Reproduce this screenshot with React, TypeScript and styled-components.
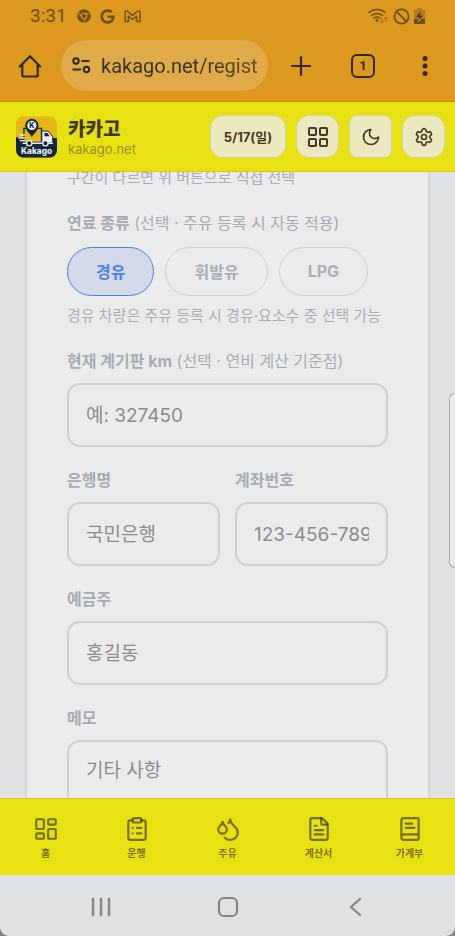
import React from 'react';
import styled, { createGlobalStyle, css } from 'styled-components';
import {
  Ban,
  BookText,
  ClipboardList,
  Droplets,
  FileText,
  LayoutDashboard,
  LayoutGrid,
  Settings,
} from 'lucide-react';
import { FaChrome, FaGoogle } from 'react-icons/fa';

const GlobalStyle = createGlobalStyle`
  * { box-sizing: border-box; }
  body {
    margin: 0;
    background: #858585;
    font-family: Inter, 'Noto Sans CJK KR', sans-serif;
  }
  button, input, textarea { font-family: inherit; }
`;

const Screen = styled.div`
  position: relative;
  display: flex;
  flex-direction: column;
  height: 100vh;
  overflow: hidden;
  border-radius: 0 0 9px 9px;
  background: #e0e1e3;
`;

/* Browser chrome */

const Chrome = styled.header`
  flex: none;
  background: #dd991d;
  border-bottom: 1px solid #c98a16;
  font-family: Roboto, sans-serif;
`;

const StatusBar = styled.div`
  display: flex;
  align-items: center;
  gap: 9px;
  height: 30px;
  padding: 2px 30px 0;
  color: #6f4f15;
`;

const Clock = styled.time`
  margin-right: 1px;
  font-size: 19px;
  line-height: 24px;
`;

const StatusRight = styled.div`
  display: flex;
  align-items: center;
  gap: 4px;
  margin-left: auto;
`;

const Toolbar = styled.div`
  display: flex;
  align-items: center;
  height: 71px;
  padding: 0 15px;
`;

const ToolButton = styled.button`
  display: flex;
  align-items: center;
  justify-content: center;
  width: 30px;
  height: 40px;
  padding: 0;
  border: 0;
  background: none;
  color: #2f2a20;
`;

const ToolGroup = styled.div`
  display: flex;
  gap: 32px;
  margin-left: 18px;
`;

const Address = styled.label`
  display: flex;
  flex: 1;
  align-items: center;
  gap: 9px;
  min-width: 0;
  height: 51px;
  margin-left: 16px;
  padding: 0 10px;
  border-radius: 26px;
  background: #e0aa48;
  color: #2f2a20;
`;

const AddressInput = styled.input`
  flex: 1;
  min-width: 0;
  padding: 0;
  border: 0;
  outline: 0;
  background: none;
  color: #3a3323;
  font-size: 20px;
  line-height: 28px;
  mask-image: linear-gradient(to right, #000 60%, rgba(0, 0, 0, 0.75));
`;

/* App header */

const AppBar = styled.header`
  display: flex;
  flex: none;
  align-items: center;
  gap: 11px;
  height: 70px;
  padding: 0 10px 0 16px;
  border-bottom: 1px solid #cfc91c;
  background: #e7e112;
`;

const Brand = styled.div`
  flex: 1;
  min-width: 0;
`;

const BrandName = styled.h1`
  margin: 0;
  color: #43371c;
  font-size: 19px;
  font-weight: 800;
  line-height: 24px;
`;

const BrandHost = styled.p`
  margin: 0;
  color: #98901d;
  font-size: 13px;
  line-height: 14px;
`;

const Actions = styled.div`
  display: flex;
  gap: 10px;
`;

const ActionButton = styled.button<{ $wide?: boolean; $square?: boolean }>`
  display: flex;
  align-items: center;
  justify-content: center;
  width: ${(p) => (p.$wide ? '76px' : '43px')};
  height: 43px;
  padding: 0;
  border: 1px solid #d5d3a8;
  border-radius: ${(p) => (p.$square ? '8px' : '13px')};
  background: #ebe8c0;
  color: #463822;
  font-size: 13px;
  font-weight: 700;
`;

/* Form */

const Content = styled.main`
  flex: 1;
  min-height: 0;
  overflow: hidden;
  padding: 0 25px;
`;

const Card = styled.form`
  display: flex;
  flex-direction: column;
  gap: 21px;
  margin-top: -41px;
  padding: 35px 40px 40px;
  border: solid #d3d5d6;
  border-width: 0 2px;
  background: #ebebeb;
`;

const Hint = styled.p`
  margin: 0;
  color: #a9adb3;
  font-size: 15px;
  line-height: 24px;
`;

const labelText = css`
  color: #a6acb4;
  font-size: 16px;
  font-weight: 700;
  line-height: 24px;
`;

const Field = styled.div`
  display: flex;
  flex-direction: column;
  gap: 10px;
  min-width: 0;
`;

const Label = styled.label`
  ${labelText}
`;

const Optional = styled.span`
  font-weight: 400;
`;

const controlBox = css`
  display: block;
  width: 100%;
  border: 2px solid #d0d0d0;
  border-radius: 13px;
  outline: 0;
  background: transparent;
  color: #555;
  font-size: 19px;
  &::placeholder {
    color: #8b8b8b;
    opacity: 1;
  }
`;

const Input = styled.input`
  ${controlBox}
  height: 64px;
  padding: 0 17px;
`;

const TextArea = styled.textarea`
  ${controlBox}
  height: 120px;
  padding: 15px 17px;
  line-height: 28px;
  resize: none;
`;

const FuelGroup = styled.fieldset`
  min-width: 0;
  margin: 0;
  padding: 0;
  border: 0;
`;

const FuelLegend = styled.legend`
  ${labelText}
  padding: 0;
`;

const Chips = styled.div`
  display: flex;
  gap: 11px;
  margin: 12px 0 8px;
`;

const Chip = styled.button<{ $active?: boolean }>`
  height: 49px;
  padding: 0 28px 2px;
  border: 1px solid ${(p) => (p.$active ? '#4d83e0' : '#cfcfcf')};
  border-radius: 25px;
  background: ${(p) => (p.$active ? '#d3d9e9' : 'transparent')};
  color: ${(p) => (p.$active ? '#4d83e0' : '#a9afb7')};
  font-size: 16px;
  font-weight: 700;
`;

const Columns = styled.div`
  display: grid;
  grid-template-columns: 1fr 1fr;
  gap: 15px;
`;

const EdgeHandle = styled.div`
  position: absolute;
  top: 393px;
  right: 0;
  width: 6px;
  height: 175px;
  border: 1px solid #a9a9a9;
  border-right: 0;
  border-radius: 6px 0 0 6px;
  background: #ebebeb;
`;

/* Bottom bars */

const TabBar = styled.nav`
  display: grid;
  flex: none;
  grid-template-columns: repeat(5, 1fr);
  height: 77px;
  border-top: 1px solid #cfc92a;
  background: #e7e112;
`;

const Tab = styled.a`
  display: flex;
  flex-direction: column;
  align-items: center;
  gap: 3px;
  padding-top: 17px;
  color: rgba(60, 45, 26, 0.64);
  font-size: 10px;
  font-weight: 700;
  line-height: 16px;
  text-decoration: none;
`;

const SystemBar = styled.nav`
  display: flex;
  flex: none;
  align-items: center;
  justify-content: center;
  gap: 97px;
  height: 61px;
  padding-top: 2px;
`;

const SystemButton = styled.button`
  display: flex;
  align-items: center;
  justify-content: center;
  width: 30px;
  height: 40px;
  padding: 0;
  border: 0;
  background: none;
  color: #858687;
`;

const Logo = () => (
  <svg width="41" height="42" viewBox="0 0 124 126" role="img" aria-label="Kakago">
    <defs>
      <clipPath id="logo-clip">
        <rect width="124" height="126" rx="24" />
      </clipPath>
    </defs>
    <g clipPath="url(#logo-clip)">
      <rect width="124" height="126" fill="#e5b716" />
      <path d="M0 64h24v12h88v-10h12v60H0z" fill="#12263c" />
      <path d="M24 37h53v42H24z" fill="#e5b716" stroke="#12263c" strokeWidth="4" />
      <path d="M78 45h19l14 17v19H78z" fill="#ececec" stroke="#12263c" strokeWidth="3" />
      <path d="M86 51h9l7 10H86z" fill="#12263c" />
      <path d="M20 82h92" stroke="#ececec" strokeWidth="5" />
      <path d="M11 57h16M7 66h20M11 74h16" stroke="#ececec" strokeWidth="4" />
      <circle cx="40" cy="82" r="8" fill="#12263c" stroke="#ececec" strokeWidth="4" />
      <circle cx="89" cy="82" r="8" fill="#12263c" stroke="#ececec" strokeWidth="4" />
      <path d="M48 63C40 50 28 42 28 28a20 20 0 0 1 40 0c0 14-12 22-20 35z" fill="#12263c" />
      <circle cx="48" cy="28" r="14" fill="#ececec" />
      <text x="48" y="36" textAnchor="middle" fontFamily="Inter, sans-serif" fontSize="21" fontWeight="800" fill="#12263c">K</text>
      <text x="62" y="114" textAnchor="middle" fontFamily="Inter, sans-serif" fontSize="25" fontWeight="800" fill="#ececec">Kakago</text>
    </g>
  </svg>
);

const GmailIcon = () => (
  <svg width="17" height="13" viewBox="0 0 18 14" fill="none" stroke="currentColor" strokeWidth="1.6" strokeLinejoin="round">
    <path d="M1 12.5V2.2C1 1 2.4.6 3.3 1.3L9 5.7l5.7-4.4C15.6.6 17 1 17 2.2v10.3h-3.6V6.8L9 10.2 4.6 6.8v5.7z" />
  </svg>
);

const WifiIcon = () => (
  <svg width="21" height="16" viewBox="0 0 21 16" fill="none" stroke="currentColor" strokeWidth="1.5" strokeLinecap="round">
    <path d="M1 4.5a12 12 0 0 1 16 0M3.5 7.5a8.3 8.3 0 0 1 11 0M6 10.2a5 5 0 0 1 6 0" />
    <circle cx="9" cy="12.5" r=".7" fill="currentColor" />
    <path d="M14 10.5v4m-1.3-1.3 1.3 1.3 1.3-1.3M18 13.5v-4m-1.3 1.3L18 9.5l1.3 1.3" strokeWidth="1" opacity=".6" />
  </svg>
);

const BatteryIcon = () => (
  <svg width="11" height="16" viewBox="0 0 11 16">
    <path d="M3 0h5v2h3v14H0V2h3z" fill="currentColor" opacity=".4" />
    <path d="M0 11h11v5H0z" fill="currentColor" />
    <path d="M6.5 3.5 2 9h3l-.5 3.5L9 7.5H6z" fill="#4f370c" />
    <path d="M5 11h1.5l-2 3z" fill="#ead9b0" />
  </svg>
);

const HomeIcon = () => (
  <svg width="24" height="24" viewBox="0 0 24 24" fill="none" stroke="currentColor" strokeWidth="2.2" strokeLinejoin="round" strokeLinecap="round">
    <path d="M1.8 12.5 12 2.2l10.2 10.3M4.3 11v10.5c0 .7.3 1 1 1h13.4c.7 0 1-.3 1-1V11" />
  </svg>
);

const SiteIcon = () => (
  <svg width="21" height="17" viewBox="0 0 21 17" fill="none" stroke="currentColor" strokeWidth="2">
    <circle cx="5" cy="4" r="2.7" />
    <circle cx="15.5" cy="12.5" r="2.7" />
    <path d="M10.5 4h8M1.5 12.5H10" />
  </svg>
);

const PlusIcon = () => (
  <svg width="22" height="22" viewBox="0 0 22 22" stroke="currentColor" strokeWidth="2.2" strokeLinecap="round">
    <path d="M11 2v18M2 11h18" />
  </svg>
);

const TabCount = styled.span`
  display: flex;
  align-items: center;
  justify-content: center;
  width: 24px;
  height: 24px;
  border: 2px solid currentColor;
  border-radius: 6px;
  font-family: Roboto, sans-serif;
  font-size: 13px;
  font-weight: 700;
`;

const DotsIcon = () => (
  <svg width="6" height="22" viewBox="0 0 6 22" fill="currentColor">
    <circle cx="3" cy="3.5" r="2.5" />
    <circle cx="3" cy="11" r="2.5" />
    <circle cx="3" cy="18.5" r="2.5" />
  </svg>
);

const MoonIcon = () => (
  <svg width="20" height="20" viewBox="0 0 24 24" fill="none" stroke="currentColor" strokeWidth="2" strokeLinecap="round" strokeLinejoin="round">
    <path d="M12 3a6 6 0 0 0 9 9 9 9 0 1 1-9-9Z" />
  </svg>
);

const fuels = ['경유', '휘발유', 'LPG'];

const tabs = [
  { label: '홈', Icon: LayoutDashboard },
  { label: '운행', Icon: ClipboardList },
  { label: '주유', Icon: Droplets },
  { label: '계산서', Icon: FileText },
  { label: '가계부', Icon: BookText },
];

type TextFieldProps = { id: string; label: string; note?: string; placeholder: string };

const TextField = ({ id, label, note, placeholder }: TextFieldProps) => (
  <Field>
    <Label htmlFor={id}>
      {label}
      {note && <Optional> {note}</Optional>}
    </Label>
    <Input id={id} type="text" placeholder={placeholder} />
  </Field>
);

export default function App() {
  const [fuel, setFuel] = React.useState(fuels[0]);

  return (
    <>
      <GlobalStyle />
      <Screen>
        <Chrome>
          <StatusBar>
            <Clock>3:31</Clock>
            <FaChrome size={14} />
            <FaGoogle size={15} />
            <GmailIcon />
            <StatusRight>
              <WifiIcon />
              <Ban size={17} strokeWidth={2.5} />
              <BatteryIcon />
            </StatusRight>
          </StatusBar>
          <Toolbar>
            <ToolButton type="button" aria-label="홈페이지"><HomeIcon /></ToolButton>
            <Address>
              <SiteIcon />
              <AddressInput aria-label="주소" defaultValue="kakago.net/register" />
            </Address>
            <ToolGroup>
              <ToolButton type="button" aria-label="새 탭"><PlusIcon /></ToolButton>
              <ToolButton type="button" aria-label="탭 전환"><TabCount>1</TabCount></ToolButton>
              <ToolButton type="button" aria-label="더보기"><DotsIcon /></ToolButton>
            </ToolGroup>
          </Toolbar>
        </Chrome>

        <AppBar>
          <Logo />
          <Brand>
            <BrandName>카카고</BrandName>
            <BrandHost>kakago.net</BrandHost>
          </Brand>
          <Actions>
            <ActionButton type="button" $wide>5/17(일)</ActionButton>
            <ActionButton type="button" aria-label="메뉴"><LayoutGrid size={24} /></ActionButton>
            <ActionButton type="button" $square aria-label="다크 모드"><MoonIcon /></ActionButton>
            <ActionButton type="button" aria-label="설정"><Settings size={20} /></ActionButton>
          </Actions>
        </AppBar>

        <Content>
          <Card>
            <Hint>구간이 다르면 위 버튼으로 직접 선택</Hint>
            <FuelGroup>
              <FuelLegend>
                연료 종류<Optional> (선택 · 주유 등록 시 자동 적용)</Optional>
              </FuelLegend>
              <Chips>
                {fuels.map((name) => (
                  <Chip
                    key={name}
                    type="button"
                    $active={name === fuel}
                    aria-pressed={name === fuel}
                    onClick={() => setFuel(name)}
                  >
                    {name}
                  </Chip>
                ))}
              </Chips>
              <Hint>경유 차량은 주유 등록 시 경유·요소수 중 선택 가능</Hint>
            </FuelGroup>
            <TextField id="odometer" label="현재 계기판 km" note="(선택 · 연비 계산 기준점)" placeholder="예: 327450" />
            <Columns>
              <TextField id="bank" label="은행명" placeholder="국민은행" />
              <TextField id="account" label="계좌번호" placeholder="123-456-789012" />
            </Columns>
            <TextField id="holder" label="예금주" placeholder="홍길동" />
            <Field>
              <Label htmlFor="memo">메모</Label>
              <TextArea id="memo" placeholder="기타 사항" />
            </Field>
          </Card>
        </Content>

        <TabBar>
          {tabs.map(({ label, Icon }) => (
            <Tab key={label} href="#">
              <Icon size={26} />
              {label}
            </Tab>
          ))}
        </TabBar>

        <SystemBar>
          <SystemButton type="button" aria-label="최근 앱">
            <svg width="20" height="20" viewBox="0 0 20 20" stroke="currentColor" strokeWidth="2.5" strokeLinecap="round">
              <path d="M2 2v16M10 2v16M18 2v16" />
            </svg>
          </SystemButton>
          <SystemButton type="button" aria-label="홈 화면">
            <svg width="22" height="22" viewBox="0 0 22 22" fill="none" stroke="currentColor" strokeWidth="2.2">
              <rect x="2" y="2" width="18" height="18" rx="5" />
            </svg>
          </SystemButton>
          <SystemButton type="button" aria-label="뒤로">
            <svg width="14" height="20" viewBox="0 0 14 20" fill="none" stroke="currentColor" strokeWidth="2.2" strokeLinecap="round" strokeLinejoin="round">
              <path d="M12 2 3 10l9 8" />
            </svg>
          </SystemButton>
        </SystemBar>
        <EdgeHandle />
      </Screen>
    </>
  );
}
